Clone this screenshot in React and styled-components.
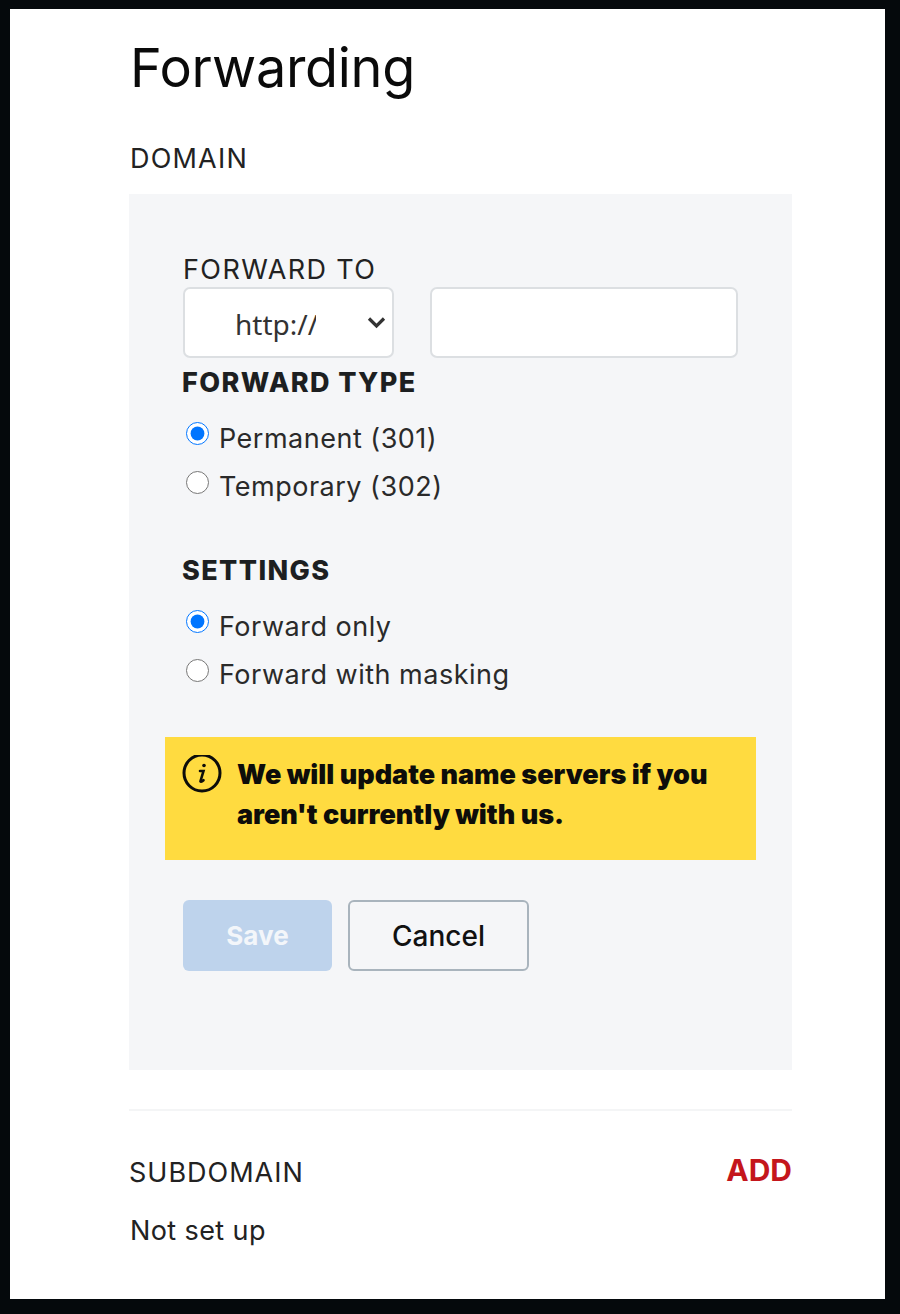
import React from "react";
import styled, { createGlobalStyle } from "styled-components";

const Global = createGlobalStyle`
  html, body { margin: 0; padding: 0; background: #05090c; }
  * { box-sizing: border-box; }
`;
const Frame = styled.div`
  width: 900px; height: 1314px; padding: 9px 15px 15px 10px; background: #05090c;
  font-family: "Inter", "Open Sans", sans-serif; color: #1f1f1f;
`;
const Sheet = styled.main`
  height: 100%; background: #fff; padding: 0 93px 0 119px; display: flex; flex-direction: column;
`;
const Title = styled.h1`
  margin: 25px 0 0 1px; height: 68px; font-size: 54px; line-height: 68px; font-weight: 400; color: #0a0a0a; letter-spacing: -0.3px;
`;
const SectionLabel = styled.div`
  font-size: 27px; line-height: 36px; letter-spacing: 1px; color: #222; text-transform: uppercase;
`;
const DomainLabel = styled(SectionLabel)`
  margin: 39px 0 0 1px; height: 53px; letter-spacing: 1.2px;
`;
const Panel = styled.section`
  height: 876px; background: #f5f6f8; padding: 58px 36px 0 54px; display: flex; flex-direction: column;
`;
const FieldLabel = styled.label`
  font-size: 27px; line-height: 36px; height: 35px; letter-spacing: 1.4px; color: #222;
`;
const ForwardRow = styled.div`
  display: flex; gap: 36px; height: 71px; margin-bottom: 7px;
`;
const SelectWrap = styled.div`
  position: relative; width: 211px; height: 71px; flex: none;
`;
const Select = styled.select`
  appearance: none; width: 100%; height: 100%; padding: 2px 76px 0 50px; background: #fff; border: 2px solid #dcdfe2; border-radius: 7px;
  font: 400 28px "Noto Sans", sans-serif; color: #333;
`;
const Chevron = styled.svg`
  position: absolute; right: 8px; top: 29px; width: 19px; height: 13px; pointer-events: none;
`;
const TextInput = styled.input`
  width: 308px; height: 71px; background: #fff; border: 2px solid #dcdfe2; border-radius: 7px;
`;
const GroupTitle = styled.h3`
  margin: ${p => p.$top || 0}px 0 0 -1px; font-size: 27px; line-height: 36px; font-weight: 800; letter-spacing: 1.4px; color: #1d1f21;
`;
const RadioRow = styled.label`
  display: flex; align-items: flex-start; height: 48.5px; font-size: 27px; line-height: 36px; letter-spacing: 0.5px; color: #2a2a2a;
`;
const Radio = styled.input`
  width: 23px; height: 23px; margin: 4px 10px 0 3px; flex: none;
`;
const RadioText = styled.span`
  margin-top: 2.5px;
`;
const RadioGroup = styled.div`
  display: flex; flex-direction: column; margin-top: 17px;
`;
const Notice = styled.div`
  margin: 34px 0 0 -18px; width: 591px; height: 123px; background: #ffdb40; display: flex; gap: 15px; padding: 18px 20px 0 17px;
`;
const NoticeText = styled.p`
  margin: 0; font-size: 27px; line-height: 40px; font-weight: 900; color: #0d0d0a; letter-spacing: 0;
`;
const Buttons = styled.div`
  display: flex; gap: 16px; margin-top: 40px;
`;
const Button = styled.button`
  height: 71px; width: ${p => p.$w}px; border-radius: 6px; font: ${p => p.$primary ? 700 : 500} ${p => p.$primary ? 26 : 28}px "Inter", sans-serif;
  background: ${p => p.$primary ? "#bed3ec" : "transparent"}; color: ${p => p.$primary ? "#f3f6fa" : "#111"};
  border: ${p => p.$primary ? "none" : "2px solid #a9b4bd"};
`;
const Divider = styled.hr`
  margin: 39px 0 0; border: 0; height: 2px; background: #f4f5f6;
`;
const SubRow = styled.div`
  display: flex; justify-content: space-between; align-items: center; margin-top: 44px; height: 36px;
`;
const AddLink = styled.a`
  font: 700 30px "Inter", sans-serif; color: #c4161c; margin-top: -6px;
`;
const Muted = styled.div`
  margin: 22px 0 0 1px; font-size: 27px; line-height: 36px; letter-spacing: 0.4px; color: #222;
`;

const InfoIcon = () => (
  <svg width="40" height="40" viewBox="0 0 40 40" style={{ flex: "none" }} fill="none" stroke="#0d0d0a">
    <circle cx="20" cy="18" r="18" strokeWidth="3" />
    <path d="M18 16h3.5l-3 10c-.3 1 .8 1.3 3 -.8" strokeWidth="2.6" strokeLinecap="round" />
    <circle cx="22" cy="10.5" r="1.8" fill="#0d0d0a" stroke="none" />
  </svg>
);

export default function App() {
  return (
    <Frame>
      <Global />
      <Sheet>
        <Title>Forwarding</Title>
        <DomainLabel>Domain</DomainLabel>
        <Panel>
          <FieldLabel>FORWARD TO</FieldLabel>
          <ForwardRow>
            <SelectWrap>
              <Select defaultValue="http"><option value="http">http://</option></Select>
              <Chevron viewBox="0 0 19 13" fill="none" stroke="#333" strokeWidth="3.2"><path d="M2 2.5l7.5 7.5 7.5-7.5" /></Chevron>
            </SelectWrap>
            <TextInput />
          </ForwardRow>
          <GroupTitle>FORWARD TYPE</GroupTitle>
          <RadioGroup>
            <RadioRow><Radio type="radio" name="t" defaultChecked /><RadioText>Permanent (301)</RadioText></RadioRow>
            <RadioRow><Radio type="radio" name="t" /><RadioText>Temporary (302)</RadioText></RadioRow>
          </RadioGroup>
          <GroupTitle $top={38}>SETTINGS</GroupTitle>
          <RadioGroup>
            <RadioRow><Radio type="radio" name="s" defaultChecked /><RadioText>Forward only</RadioText></RadioRow>
            <RadioRow><Radio type="radio" name="s" /><RadioText>Forward with masking</RadioText></RadioRow>
          </RadioGroup>
          <Notice>
            <InfoIcon />
            <NoticeText>We will update name servers if you aren't currently with us.</NoticeText>
          </Notice>
          <Buttons>
            <Button $primary $w={149}>Save</Button>
            <Button $w={181}>Cancel</Button>
          </Buttons>
        </Panel>
        <Divider />
        <SubRow>
          <SectionLabel>Subdomain</SectionLabel>
          <AddLink>ADD</AddLink>
        </SubRow>
        <Muted>Not set up</Muted>
      </Sheet>
    </Frame>
  );
}
